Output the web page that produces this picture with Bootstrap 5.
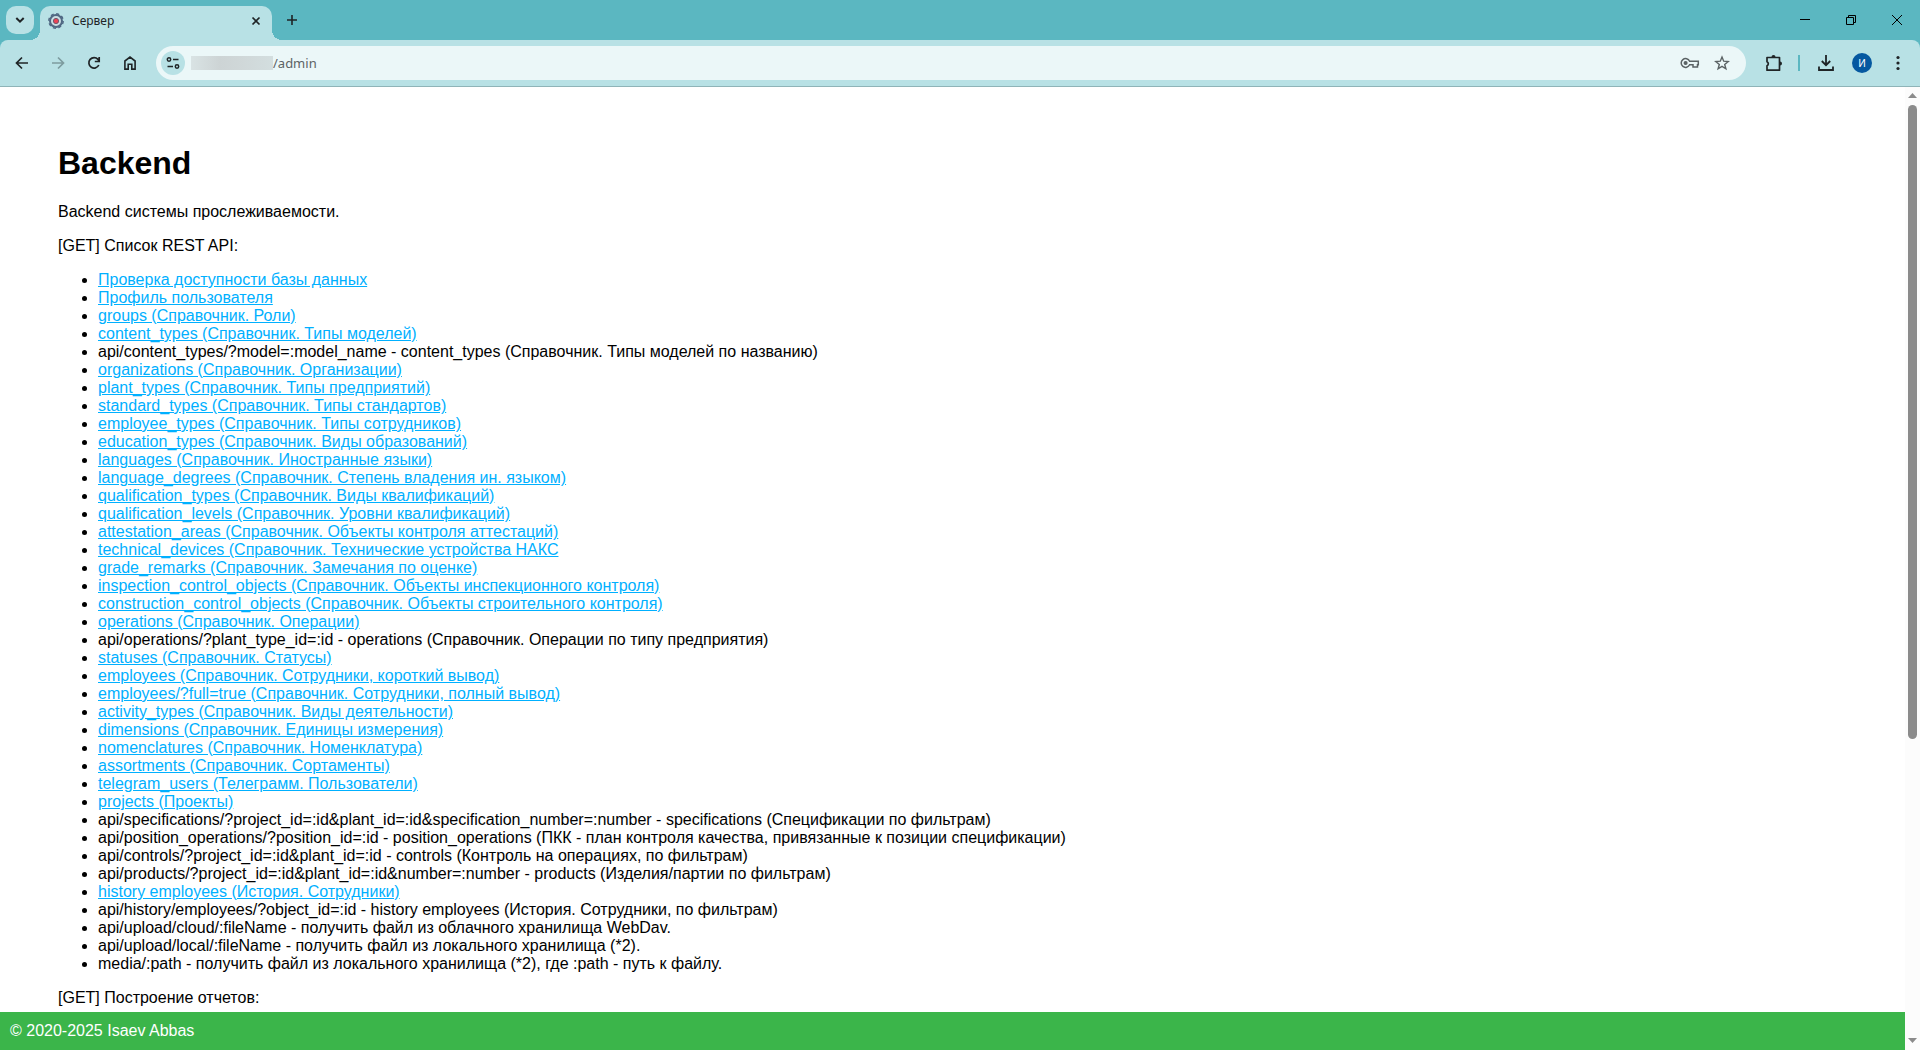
<!DOCTYPE html>
<html lang="ru">
<head>
<meta charset="utf-8">
<meta name="viewport" content="width=device-width, initial-scale=1">
<title>Сервер</title>
<link href="https://cdn.jsdelivr.net/npm/bootstrap@5.3.0/dist/css/bootstrap.min.css" rel="stylesheet">
<style>
  :root { --strip: #5bb7c1; --bar: #b8e1e5; --ink: #1f2426; }
  body { font-family: "Liberation Sans", Arial, sans-serif; font-size: 16px; line-height: 18px; color: #000; background: #fff; }
  svg { display: block; }
  .plain-btn { border: 0; padding: 0; background: none; color: inherit; display: flex; align-items: center; justify-content: center; flex: none; }
  .chrome-ui { font-family: "Noto Sans", "Open Sans", sans-serif; color: var(--ink); }
  .tab-strip { height: 40px; background: var(--strip); padding: 6px 0 0 6px; }
  .tab-menu { width: 28px; height: 28px; border-radius: 10px; background: var(--bar); }
  .browser-tab { width: 232px; height: 34px; margin-left: 6px; padding: 0 10px 4px 8px; background: var(--bar); border-radius: 10px 10px 0 0; font-size: 12px; }
  .browser-tab::before, .browser-tab::after { content: ""; position: absolute; bottom: 0; width: 10px; height: 10px; }
  .browser-tab::before { left: -10px; background: radial-gradient(circle at 0 0, transparent 10px, var(--bar) 10px); }
  .browser-tab::after { right: -10px; background: radial-gradient(circle at 100% 0, transparent 10px, var(--bar) 10px); }
  .new-tab { width: 28px; height: 28px; margin-left: 6px; }
  .win-btn { width: 46px; height: 28px; color: #000; }
  .strip-bg { background: var(--strip); }
  .tool-bar { height: 47px; padding: 0 10px; background: var(--bar); border-bottom: 1px solid #8fb4b8; border-radius: 8px 8px 0 0; gap: 12px; }
  .tool-btn { width: 24px; height: 24px; }
  .faded { color: #7d9c9f; }
  .address-bar { height: 34px; border-radius: 17px; background: #ebf7f8; padding: 0 8px 0 5px; margin: 0 4px 0 2px; }
  .site-info { width: 24px; height: 24px; border-radius: 50%; background: var(--bar); }
  .hidden-host { width: 82px; height: 14px; margin-left: 6px; background: linear-gradient(90deg, #d9e3e4, #cdd4d5 35%, #d0d8d9 65%, #d3dedf); }
  .url-field { border: 0; outline: 0; background: none; padding: 0; font-size: 13px; line-height: 20px; color: #5c6365; min-width: 0; }
  .bar-icon { width: 32px; height: 24px; color: #5b6365; }
  .divider-line { width: 2px; height: 16px; margin-right: 2px; background: var(--strip); }
  .avatar { width: 20px; height: 20px; border-radius: 50%; background: #0558a0; color: #fff; font-size: 10px; line-height: 20px; }
  .page-body { padding: 58px 58px 0; }
  .page-body h1 { font-size: 32px; line-height: 36px; font-weight: 700; margin: 0 0 22px; }
  .page-body p { margin: 0 0 16px; }
  .page-body ul { margin: 0 0 16px; padding-left: 40px; }
  .page-body a { color: #00b0ff; }
  .page-foot { background: #3bb54a; color: #fff; padding: 10px; }
  .scroll-col { width: 15px; background: #fcfcfc; color: #8b8b8b; padding: 6px 0 7px; }
  .scroll-thumb { width: 9px; flex: 634 0 0; margin-top: 7px; background: #8b8b8b; border-radius: 5px; }
  .scroll-rest { flex: 299 0 0; }
</style>
<script src="https://cdn.jsdelivr.net/npm/bootstrap@5.3.0/dist/js/bootstrap.bundle.min.js"></script>
</head>
<body class="vh-100 d-flex flex-column overflow-hidden">
<header class="chrome-ui flex-shrink-0">
  <div class="tab-strip d-flex align-items-start">
    <button class="plain-btn tab-menu" aria-label="Поиск вкладок"><svg width="12" height="12" viewBox="0 0 12 12" fill="none" stroke="currentColor" stroke-width="2"><path d="M2.300 4l3.700 3.700L9.700 4"/></svg></button>
    <div class="browser-tab position-relative d-flex align-items-center">
      <svg width="16" height="16" viewBox="0 0 16 16"><circle cx="8" cy="8" r="6" fill="#c9dce1" stroke="#506883" stroke-width="2"/><circle cx="8" cy="8" r="7.200" fill="none" stroke="#506883" stroke-width="1.400" stroke-dasharray="3.100 2.550"/><circle cx="8" cy="8" r="2.600" fill="#ed4255" stroke="#6c596e"/></svg>
      <span class="ms-2 flex-grow-1">Сервер</span>
      <button class="plain-btn" aria-label="Закрыть вкладку"><svg width="12" height="12" viewBox="0 0 12 12" stroke="currentColor" stroke-width="1.700"><path d="M2.500 2.500l7 7M9.500 2.500l-7 7"/></svg></button>
    </div>
    <button class="plain-btn new-tab" aria-label="Новая вкладка"><svg width="12" height="12" viewBox="0 0 12 12" stroke="currentColor" stroke-width="1.600"><path d="M6 1v10M1 6h10"/></svg></button>
    <div class="d-flex ms-auto">
      <button class="plain-btn win-btn" aria-label="Свернуть"><svg width="12" height="12" viewBox="0 0 12 12" stroke="currentColor"><path d="M1 5.500h10"/></svg></button>
      <button class="plain-btn win-btn" aria-label="Восстановить"><svg width="12" height="12" viewBox="0 0 12 12" fill="none" stroke="currentColor"><path d="M1.500 3.500h7v7h-7zM3.500 3.500v-2h7v7h-2"/></svg></button>
      <button class="plain-btn win-btn" aria-label="Закрыть"><svg width="12" height="12" viewBox="0 0 12 12" stroke="currentColor"><path d="M1 1l10 10M11 1L1 11"/></svg></button>
    </div>
  </div>
  <div class="strip-bg">
    <div class="tool-bar d-flex align-items-center">
      <button class="plain-btn tool-btn" aria-label="Назад"><svg width="14" height="14" viewBox="0 0 14 14" fill="none" stroke="currentColor" stroke-width="1.700"><path d="M13 7H2M7 1.500L1.500 7 7 12.500"/></svg></button>
      <button class="plain-btn tool-btn faded" aria-label="Вперёд"><svg width="14" height="14" viewBox="0 0 14 14" fill="none" stroke="currentColor" stroke-width="1.700"><path d="M1 7h11M7 1.500L12.500 7 7 12.500"/></svg></button>
      <button class="plain-btn tool-btn" aria-label="Обновить"><svg width="14" height="14" viewBox="0 0 14 14" fill="none" stroke="currentColor" stroke-width="1.700"><path d="M11.800 9A5.200 5.200 0 1 1 11 3.400L12 4.600M12.200 1v4.500H7.800"/></svg></button>
      <button class="plain-btn tool-btn" aria-label="Домой"><svg width="14" height="14" viewBox="0 0 14 14" fill="none" stroke="currentColor" stroke-width="1.600"><path d="M1.900 13.100V5L7 1.100 12.100 5v8.100H8.800V8.200H5.200v4.900z"/></svg></button>
      <div class="address-bar d-flex align-items-center flex-grow-1">
        <button class="plain-btn site-info" aria-label="Сведения о сайте"><svg width="14" height="14" viewBox="0 0 14 14" fill="none" stroke="currentColor" stroke-width="1.500"><circle cx="3" cy="3.500" r="1.700"/><path d="M7 3.500h5.500M1.500 10.500H7"/><circle cx="11" cy="10.500" r="1.700"/></svg></button>
        <span class="hidden-host"></span>
        <input class="url-field flex-grow-1" type="text" value="/admin" aria-label="Адрес">
        <button class="plain-btn bar-icon" aria-label="Пароли"><svg width="20" height="12" viewBox="0 0 20 12" fill="none" stroke="currentColor" stroke-width="1.500"><path d="M9.600 4.200A4.400 4.400 0 1 0 9.600 7.800H13V10h4.500V7.800h.8V4.200z"/><circle cx="5.600" cy="6" r="1.300" fill="currentColor"/></svg></button>
        <button class="plain-btn bar-icon" aria-label="Закладка"><svg width="16" height="16" viewBox="0 0 16 16" fill="none" stroke="currentColor" stroke-width="1.400"><path d="M8 2l1.700 4.200 4.500.3-3.500 2.900 1.200 4.400L8 11.400l-3.900 2.400 1.200-4.400-3.500-2.900 4.500-.3z"/></svg></button>
      </div>
      <button class="plain-btn tool-btn" aria-label="Расширения"><svg width="18" height="18" viewBox="0 0 18 18"><path d="M2 3.500h12.500v12.700H2v-4.400a2.200 2.200 0 0 0 0-4z" fill="none" stroke="currentColor" stroke-width="1.700" stroke-linejoin="round"/><path d="M6.500 3a2 2 0 0 1 4 0zM15 7.500a2 2 0 0 1 0 4z" fill="currentColor"/></svg></button>
      <span class="divider-line"></span>
      <button class="plain-btn tool-btn" aria-label="Загрузки"><svg width="18" height="18" viewBox="0 0 18 18" fill="none" stroke="currentColor" stroke-width="1.800"><path d="M9 1v10M4.800 7L9 11.200 13.200 7M2 12.500v3.500h14v-3.500"/></svg></button>
      <button class="plain-btn tool-btn" aria-label="Профиль"><span class="avatar">И</span></button>
      <button class="plain-btn tool-btn" aria-label="Меню"><svg width="4" height="16" viewBox="0 0 4 16" fill="currentColor"><circle cx="2" cy="2.500" r="1.600"/><circle cx="2" cy="8" r="1.600"/><circle cx="2" cy="13.500" r="1.600"/></svg></button>
    </div>
  </div>
</header>
<div class="d-flex flex-grow-1 overflow-hidden">
  <div class="d-flex flex-column flex-grow-1 overflow-hidden">
    <main class="page-body flex-grow-1 overflow-hidden">
      <h1>Backend</h1>
      <p>Backend системы прослеживаемости.</p>
      <p>[GET] Список REST API:</p>
      <ul>
        <li><a href="#">Проверка доступности базы данных</a></li>
        <li><a href="#">Профиль пользователя</a></li>
        <li><a href="#">groups (Справочник. Роли)</a></li>
        <li><a href="#">content_types (Справочник. Типы моделей)</a></li>
        <li>api/content_types/?model=:model_name - content_types (Справочник. Типы моделей по названию)</li>
        <li><a href="#">organizations (Справочник. Организации)</a></li>
        <li><a href="#">plant_types (Справочник. Типы предприятий)</a></li>
        <li><a href="#">standard_types (Справочник. Типы стандартов)</a></li>
        <li><a href="#">employee_types (Справочник. Типы сотрудников)</a></li>
        <li><a href="#">education_types (Справочник. Виды образований)</a></li>
        <li><a href="#">languages (Справочник. Иностранные языки)</a></li>
        <li><a href="#">language_degrees (Справочник. Степень владения ин. языком)</a></li>
        <li><a href="#">qualification_types (Справочник. Виды квалификаций)</a></li>
        <li><a href="#">qualification_levels (Справочник. Уровни квалификаций)</a></li>
        <li><a href="#">attestation_areas (Справочник. Объекты контроля аттестаций)</a></li>
        <li><a href="#">technical_devices (Справочник. Технические устройства НАКС</a></li>
        <li><a href="#">grade_remarks (Справочник. Замечания по оценке)</a></li>
        <li><a href="#">inspection_control_objects (Справочник. Объекты инспекционного контроля)</a></li>
        <li><a href="#">construction_control_objects (Справочник. Объекты строительного контроля)</a></li>
        <li><a href="#">operations (Справочник. Операции)</a></li>
        <li>api/operations/?plant_type_id=:id - operations (Справочник. Операции по типу предприятия)</li>
        <li><a href="#">statuses (Справочник. Статусы)</a></li>
        <li><a href="#">employees (Справочник. Сотрудники, короткий вывод)</a></li>
        <li><a href="#">employees/?full=true (Справочник. Сотрудники, полный вывод)</a></li>
        <li><a href="#">activity_types (Справочник. Виды деятельности)</a></li>
        <li><a href="#">dimensions (Справочник. Единицы измерения)</a></li>
        <li><a href="#">nomenclatures (Справочник. Номенклатура)</a></li>
        <li><a href="#">assortments (Справочник. Сортаменты)</a></li>
        <li><a href="#">telegram_users (Телеграмм. Пользователи)</a></li>
        <li><a href="#">projects (Проекты)</a></li>
        <li>api/specifications/?project_id=:id&amp;plant_id=:id&amp;specification_number=:number - specifications (Спецификации по фильтрам)</li>
        <li>api/position_operations/?position_id=:id - position_operations (ПКК - план контроля качества, привязанные к позиции спецификации)</li>
        <li>api/controls/?project_id=:id&amp;plant_id=:id - controls (Контроль на операциях, по фильтрам)</li>
        <li>api/products/?project_id=:id&amp;plant_id=:id&amp;number=:number - products (Изделия/партии по фильтрам)</li>
        <li><a href="#">history employees (История. Сотрудники)</a></li>
        <li>api/history/employees/?object_id=:id - history employees (История. Сотрудники, по фильтрам)</li>
        <li>api/upload/cloud/:fileName - получить файл из облачного хранилища WebDav.</li>
        <li>api/upload/local/:fileName - получить файл из локального хранилища (*2).</li>
        <li>media/:path - получить файл из локального хранилища (*2), где :path - путь к файлу.</li>
      </ul>
      <p>[GET] Построение отчетов:</p>
    </main>
    <footer class="page-foot flex-shrink-0">© 2020-2025 Isaev Abbas</footer>
  </div>
  <div class="scroll-col d-flex flex-column align-items-center flex-shrink-0" aria-hidden="true">
    <svg class="flex-shrink-0" width="9" height="5" viewBox="0 0 9 5" fill="currentColor"><path d="M0 5L4.500 0 9 5z"/></svg>
    <div class="scroll-thumb"></div>
    <div class="scroll-rest"></div>
    <svg class="flex-shrink-0" width="9" height="5" viewBox="0 0 9 5" fill="currentColor"><path d="M0 0h9L4.500 5z"/></svg>
  </div>
</div>
</body>
</html>
